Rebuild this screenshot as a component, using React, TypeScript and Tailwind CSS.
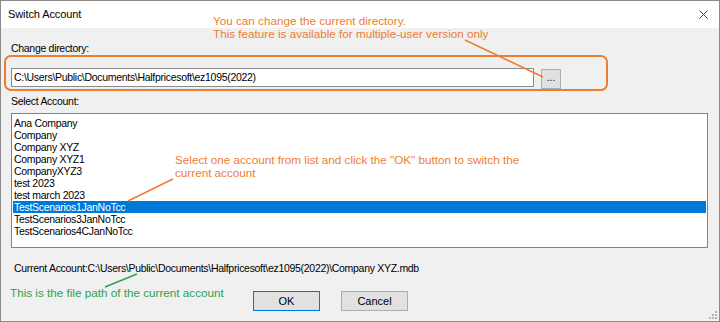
const accounts = [
  'Ana Company',
  'Company',
  'Company XYZ',
  'Company XYZ1',
  'CompanyXYZ3',
  'test 2023',
  'test march 2023',
  'TestScenarios1JanNoTcc',
  'TestScenarios3JanNoTcc',
  'TestScenarios4CJanNoTcc',
];

const selected = 'TestScenarios1JanNoTcc';

export default function App() {
  return (
    <div className="relative w-[720px] h-[322px] border border-[#8a8a8a] bg-[#f0f0f0] flex flex-col overflow-hidden font-['Liberation_Sans',Arial,sans-serif] text-black">
      {/* Title bar */}
      <div className="h-[27px] shrink-0 bg-white flex items-center justify-between pl-[7px] pr-[11px]">
        <span className="text-[11px] tracking-[-0.1px]">Switch Account</span>
        <svg width="9" height="9" viewBox="0 0 9 9" className="mt-[-1px]">
          <path d="M0.5 0.5 L8.5 8.5 M8.5 0.5 L0.5 8.5" stroke="#444" strokeWidth="1" />
        </svg>
      </div>

      {/* Body */}
      <div className="flex-1 flex flex-col px-[10px] text-[10.5px] tracking-[-0.3px]">
        <div className="mt-[13px] leading-[14px]">Change directory:</div>

        {/* orange callout frame */}
        <div className="ml-[-7px] w-[604px] h-[36px] border-2 border-[#ed7d31] rounded-[7px] flex items-start pt-[11px] pl-[5px] gap-[7px]">
          <div className="w-[523px] h-[19px] bg-white border border-[#8c8c8c] flex items-center pl-[2px]">
            C:\Users\Public\Documents\Halfpricesoft\ez1095(2022)
          </div>
          <div className="w-[20px] h-[20px] mt-[1px] bg-[#e1e1e1] border border-[#adadad] flex items-center justify-center text-[10px] tracking-normal leading-none pb-[2px]">
            ...
          </div>
        </div>

        <div className="mt-[3px] leading-[14px]">Select Account:</div>

        {/* list box */}
        <div className="mt-[5px] w-[697px] h-[135px] bg-white border border-[#828282] pt-[3px] px-[1px]">
          {accounts.map((a) => (
            <div
              key={a}
              className={
                a === selected
                  ? 'h-[12px] leading-[12px] pl-[1px] bg-[#0078d7] text-white'
                  : 'h-[12px] leading-[12px] pl-[1px]'
              }
            >
              {a}
            </div>
          ))}
        </div>

        <div className="mt-[13px] ml-[3px] leading-[14px]">
          Current Account:C:\Users\Public\Documents\Halfpricesoft\ez1095(2022)\Company XYZ.mdb
        </div>

        <div className="mt-[16px] ml-[242px] flex gap-[21px] tracking-normal">
          <button className="w-[67px] h-[20px] bg-[#e1e1e1] border border-[#0078d7] text-[11px]">OK</button>
          <button className="w-[67px] h-[20px] bg-[#e1e1e1] border border-[#adadad] text-[11px]">Cancel</button>
        </div>
      </div>

      {/* resize grip */}
      <svg width="8" height="8" viewBox="0 0 8 8" className="absolute right-[2px] bottom-[2px]">
        <rect x="6" y="0" width="2" height="2" fill="#b4b4b4" />
        <rect x="3" y="3" width="2" height="2" fill="#b4b4b4" />
        <rect x="6" y="3" width="2" height="2" fill="#b4b4b4" />
        <rect x="0" y="6" width="2" height="2" fill="#b4b4b4" />
        <rect x="3" y="6" width="2" height="2" fill="#b4b4b4" />
        <rect x="6" y="6" width="2" height="2" fill="#b4b4b4" />
      </svg>

      {/* annotations */}
      <div className="absolute left-[212px] top-[13px] text-[11.7px] leading-[13px] text-[#ed7d31]">
        <div>You can change the current directory.</div>
        <div>This feature is available for multiple-user version only</div>
      </div>
      <div className="absolute left-[174px] top-[152px] text-[11.7px] leading-[13px] text-[#ed7d31]">
        <div>Select one account from list and click the "OK" button to switch the</div>
        <div>current account</div>
      </div>
      <div className="absolute left-[9px] top-[285px] text-[11.7px] leading-[14px] text-[#2ea24f]">
        This is the file path of the current account
      </div>
      <svg width="720" height="322" className="absolute left-[-1px] top-[-1px] pointer-events-none">
        <line x1="465" y1="40" x2="543" y2="77" stroke="#ed7d31" strokeWidth="1.5" />
        <line x1="128" y1="201" x2="173" y2="179" stroke="#ed7d31" strokeWidth="1.5" />
        <line x1="105" y1="287" x2="137" y2="274" stroke="#2ea24f" strokeWidth="1.5" />
      </svg>
    </div>
  );
}
